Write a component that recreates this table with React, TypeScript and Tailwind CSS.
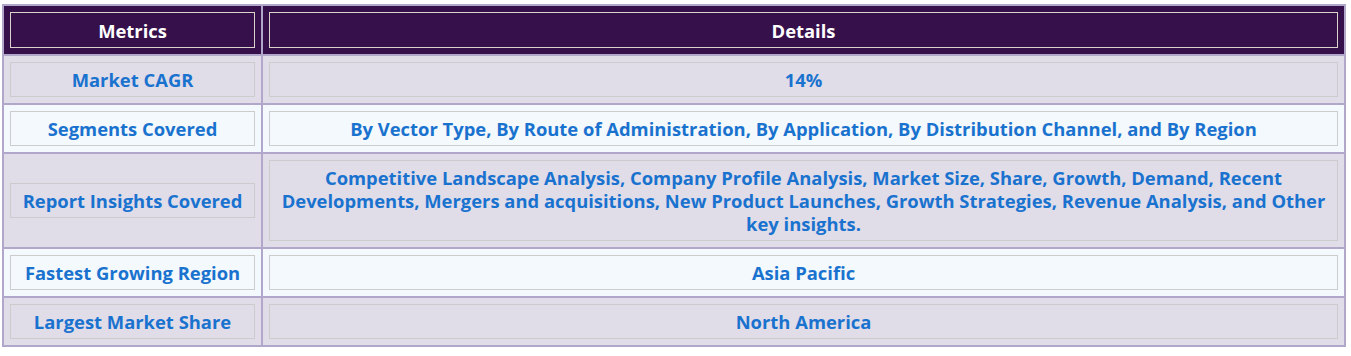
import React from 'react';

type Row = { metric: string; details: string };

const ROWS: Row[] = [
  { metric: 'Market CAGR', details: '14%' },
  {
    metric: 'Segments Covered',
    details: 'By Vector Type, By Route of Administration, By Application, By Distribution Channel, and By Region',
  },
  {
    metric: 'Report Insights Covered',
    details:
      'Competitive Landscape Analysis, Company Profile Analysis, Market Size, Share, Growth, Demand, Recent Developments, Mergers and acquisitions, New Product Launches, Growth Strategies, Revenue Analysis, and Other key insights.',
  },
  { metric: 'Fastest Growing Region', details: 'Asia Pacific' },
  { metric: 'Largest Market Share', details: 'North America' },
];

export default function App() {
  return (
    <div className="w-[1351px] h-[356px] bg-white pt-[4px] pl-[2px] font-['Open_Sans','Lato',sans-serif]">
      <table className="w-[1344px] border-collapse border-2 border-[#b1a7ca] table-fixed">
        <colgroup>
          <col className="w-[259px]" />
          <col />
        </colgroup>
        <thead>
          <tr className="bg-[#36104a]">
            <th className="border-2 border-[#b1a7ca] p-[6px]">
              <div className="border border-[#d9d3cb] pt-[6px] pb-[5px] text-[18.4px] leading-[23px] font-bold text-white">Metrics</div>
            </th>
            <th className="border-2 border-[#b1a7ca] p-[6px]">
              <div className="border border-[#d9d3cb] pt-[6px] pb-[5px] text-[18.4px] leading-[23px] font-bold text-white">Details</div>
            </th>
          </tr>
        </thead>
        <tbody>
          {ROWS.map((r, i) => (
            <tr key={r.metric} className={i % 2 === 0 ? 'bg-[#e0dde9]' : 'bg-[#f3f9fc]'}>
              <td className="border-2 border-[#b1a7ca] p-[6px] align-middle">
                <div className="border border-[#cccccc] py-[5px] text-center text-[18.4px] leading-[23px] font-bold text-[#1a72cf]">
                  {r.metric}
                </div>
              </td>
              <td className="border-2 border-[#b1a7ca] p-[6px] align-middle">
                <div className="min-h-[35px] flex items-center justify-center border border-[#cccccc] px-[6px] py-[5px] text-center text-[18.4px] leading-[23px] font-bold text-[#1a72cf]">
                  {r.details}
                </div>
              </td>
            </tr>
          ))}
        </tbody>
      </table>
    </div>
  );
}
